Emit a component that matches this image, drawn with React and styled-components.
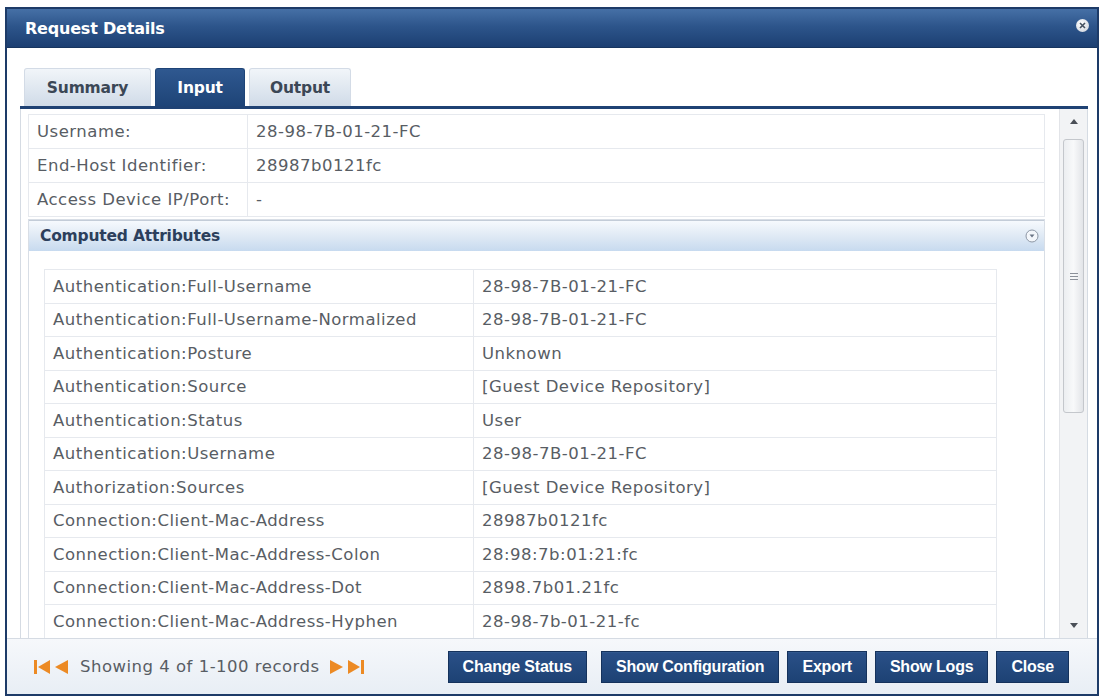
import React, { useState } from 'react'
import styled, { createGlobalStyle } from 'styled-components'

const GlobalStyle = createGlobalStyle`
  html, body {
    margin: 0;
    padding: 0;
    background: #fff;
    overflow: hidden;
  }
  * {
    box-sizing: border-box;
  }
`

const Dialog = styled.div`
  width: 1094px;
  height: 689px;
  margin: 7px 0 0 5px;
  border: 2px solid #1d3b68;
  display: flex;
  flex-direction: column;
  background: #fff;
  font-family: "DejaVu Sans", Verdana, sans-serif;
`

const TitleBar = styled.div`
  height: 39px;
  flex: none;
  display: flex;
  align-items: center;
  justify-content: space-between;
  padding: 0 8px 0 18px;
  background: linear-gradient(#4670a6 0%, #2d558b 45%, #1c3f72 100%);
  border-bottom: 1px solid #17355f;
  color: #fff;
  font-weight: bold;
  font-size: 16px;
  letter-spacing: -0.2px;
`

const CloseDot = styled.div`
  width: 13px;
  height: 13px;
  border-radius: 50%;
  margin-top: -6px;
  background: radial-gradient(circle at 40% 35%, #ffffff, #c9cfd8);
  display: flex;
  align-items: center;
  justify-content: center;
`

const Body = styled.div`
  flex: 1;
  min-height: 0;
  display: flex;
  flex-direction: column;
  padding: 20px 9px 0 13px;
`

const TabRow = styled.div`
  display: flex;
  gap: 4px;
  padding-left: 4px;
  height: 38px;
  flex: none;
`

const Tab = styled.div`
  width: ${p => p.$w}px;
  display: flex;
  align-items: center;
  justify-content: center;
  border-radius: 3px 3px 0 0;
  font-size: 15.5px;
  font-weight: bold;
  letter-spacing: -0.2px;
  cursor: pointer;
  color: ${p => (p.$active ? '#fff' : '#3b4756')};
  background: ${p =>
    p.$active
      ? 'linear-gradient(#2f5890, #1e4477)'
      : 'linear-gradient(#f1f5f9, #d0dbe8)'};
  border: 1px solid ${p => (p.$active ? '#1e4477' : '#d3dbe6')};
  border-bottom: none;
`

const TabLine = styled.div`
  height: 3px;
  flex: none;
  background: #1f4274;
`

const Content = styled.div`
  flex: 1;
  min-height: 0;
  display: flex;
  border-left: 1px solid #d5dbe3;
  border-right: 1px solid #d5dbe3;
`

const ScrollArea = styled.div`
  flex: 1;
  overflow: hidden;
  padding: 5px 14px 0 7px;
`

const InfoTable = styled.div`
  border: 1px solid #e6e9ee;
  border-bottom: none;
`

const InfoRow = styled.div`
  display: grid;
  grid-template-columns: ${p => p.$label}px 1fr;
  height: ${p => p.$h}px;
  border-bottom: 1px solid #e6e9ee;
  font-size: 16.5px;
  letter-spacing: 0.5px;
  color: #585d64;
`

const Cell = styled.div`
  display: flex;
  align-items: center;
  padding-left: 8px;
  white-space: nowrap;
  & + & {
    border-left: 1px solid #e6e9ee;
  }
`

const Panel = styled.div`
  margin-top: 2px;
  border: 1px solid #d8dee6;
`

const PanelHead = styled.div`
  height: 31px;
  display: flex;
  align-items: center;
  justify-content: space-between;
  padding: 0 5px 0 11px;
  background: linear-gradient(#f6f9fd 0%, #dde8f4 55%, #c7daef 100%);
  border-top: 1px solid #c3ccd8;
  color: #2c3f5c;
  font-weight: bold;
  font-size: 15.5px;
  letter-spacing: -0.2px;
`

const PanelBody = styled.div`
  padding: 18px 47px 4px 15px;
`

const Scrollbar = styled.div`
  width: 28px;
  flex: none;
  background: #f2f3f5;
  border-left: 1px solid #e2e4e8;
  display: flex;
  flex-direction: column;
  align-items: center;
  padding: 10px 0 10px;
`

const Arrow = styled.div`
  width: 0;
  height: 0;
  border-left: 4px solid transparent;
  border-right: 4px solid transparent;
  ${p =>
    p.$up
      ? 'border-bottom: 5px solid #4a4f57;'
      : 'border-top: 5px solid #4a4f57;'}
`

const Thumb = styled.div`
  width: 21px;
  height: 274px;
  margin-top: 15px;
  border: 1px solid #c4c7cc;
  border-radius: 3px;
  background: linear-gradient(90deg, #eceef1, #f8f9fa 50%, #e2e4e8);
  display: flex;
  flex-direction: column;
  align-items: center;
  justify-content: center;
  gap: 2px;
`

const Grip = styled.div`
  width: 8px;
  height: 1px;
  background: #8b9099;
`

const Track = styled.div`
  flex: 1;
`

const Footer = styled.div`
  height: 56px;
  flex: none;
  display: flex;
  align-items: center;
  justify-content: space-between;
  padding: 0 28px 0 13px;
  margin: 0 -9px 0 -13px;
  border-top: 1px solid #d5dbe3;
  background: linear-gradient(#f6f8fb, #e8eef5);
`

const Pager = styled.div`
  display: flex;
  align-items: center;
  gap: 4px;
  padding-left: 14px;
  font-size: 16.5px;
  letter-spacing: 0.5px;
  color: #585d64;
`

const PagerText = styled.span`
  margin: 0 6px 0 8px;
`

const Buttons = styled.div`
  display: flex;
  gap: 8px;
`

const Button = styled.button`
  height: 32px;
  padding: 0 14px;
  border: 1px solid #15325c;
  box-shadow: inset 0 1px 0 #3d63996e;
  background: linear-gradient(#2a5088, #1d4274);
  color: #fff;
  font-family: "Liberation Sans", Arial, sans-serif;
  font-weight: bold;
  font-size: 16px;
  letter-spacing: -0.2px;
  cursor: pointer;
  &:first-child {
    margin-right: 6px;
  }
`

const Orange = '#ec8a24'

const NavIcon = ({ dir, bar }) => (
  <svg width={bar ? 16 : 14} height="14" viewBox={bar ? '0 0 16 14' : '0 0 14 14'}>
    {dir === 'left' ? (
      <>
        {bar && <rect x="0" y="0" width="3" height="14" fill={Orange} />}
        <polygon points={bar ? '16,0 4,7 16,14' : '14,0 1,7 14,14'} fill={Orange} />
      </>
    ) : (
      <>
        <polygon points={bar ? '0,0 12,7 0,14' : '0,0 13,7 0,14'} fill={Orange} />
        {bar && <rect x="13" y="0" width="3" height="14" fill={Orange} />}
      </>
    )}
  </svg>
)

const topRows = [
  ['Username:', '28-98-7B-01-21-FC'],
  ['End-Host Identifier:', '28987b0121fc'],
  ['Access Device IP/Port:', '-'],
]

const attrs = [
  ['Authentication:Full-Username', '28-98-7B-01-21-FC'],
  ['Authentication:Full-Username-Normalized', '28-98-7B-01-21-FC'],
  ['Authentication:Posture', 'Unknown'],
  ['Authentication:Source', '[Guest Device Repository]'],
  ['Authentication:Status', 'User'],
  ['Authentication:Username', '28-98-7B-01-21-FC'],
  ['Authorization:Sources', '[Guest Device Repository]'],
  ['Connection:Client-Mac-Address', '28987b0121fc'],
  ['Connection:Client-Mac-Address-Colon', '28:98:7b:01:21:fc'],
  ['Connection:Client-Mac-Address-Dot', '2898.7b01.21fc'],
  ['Connection:Client-Mac-Address-Hyphen', '28-98-7b-01-21-fc'],
]

const tabs = [
  { name: 'Summary', w: 127 },
  { name: 'Input', w: 90 },
  { name: 'Output', w: 102 },
]

const App = () => {
  const [tab, setTab] = useState('Input')

  return (
    <>
      <GlobalStyle />
      <Dialog>
        <TitleBar>
          Request Details
          <CloseDot>
            <svg width="7" height="7" viewBox="0 0 7 7">
              <path d="M1 1L6 6M6 1L1 6" stroke="#44505f" strokeWidth="1.6" />
            </svg>
          </CloseDot>
        </TitleBar>
        <Body>
          <TabRow>
            {tabs.map(t => (
              <Tab key={t.name} $w={t.w} $active={tab === t.name} onClick={() => setTab(t.name)}>
                {t.name}
              </Tab>
            ))}
          </TabRow>
          <TabLine />
          <Content>
            <ScrollArea>
              <InfoTable>
                {topRows.map(([k, v]) => (
                  <InfoRow key={k} $label={218} $h={34}>
                    <Cell>{k}</Cell>
                    <Cell>{v}</Cell>
                  </InfoRow>
                ))}
              </InfoTable>
              <Panel>
                <PanelHead>
                  Computed Attributes
                  <svg width="14" height="14" viewBox="0 0 14 14">
                    <circle cx="7" cy="7" r="6" fill="#f4f7fb" stroke="#8d97a5" strokeWidth="1" />
                    <polygon points="4.5,5.5 9.5,5.5 7,8.5" fill="#6b7686" />
                  </svg>
                </PanelHead>
                <PanelBody>
                  <InfoTable>
                    {attrs.map(([k, v]) => (
                      <InfoRow key={k} $label={428} $h={33.5}>
                        <Cell>{k}</Cell>
                        <Cell>{v}</Cell>
                      </InfoRow>
                    ))}
                  </InfoTable>
                </PanelBody>
              </Panel>
            </ScrollArea>
            <Scrollbar>
              <Arrow $up />
              <Thumb>
                <Grip />
                <Grip />
                <Grip />
              </Thumb>
              <Track />
              <Arrow />
            </Scrollbar>
          </Content>
          <Footer>
            <Pager>
              <NavIcon dir="left" bar />
              <NavIcon dir="left" />
              <PagerText>Showing 4 of 1-100 records</PagerText>
              <NavIcon dir="right" />
              <NavIcon dir="right" bar />
            </Pager>
            <Buttons>
              <Button>Change Status</Button>
              <Button>Show Configuration</Button>
              <Button>Export</Button>
              <Button>Show Logs</Button>
              <Button>Close</Button>
            </Buttons>
          </Footer>
        </Body>
      </Dialog>
    </>
  )
}

export default App
